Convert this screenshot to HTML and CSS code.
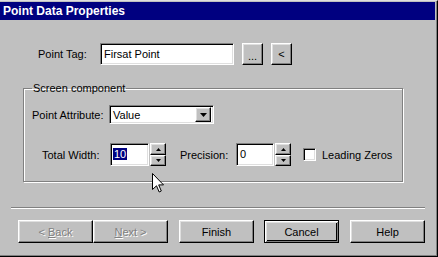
FILE: index.html
```html
<!DOCTYPE html>
<html lang="en">
<head>
  <meta charset="UTF-8" />
  <title>Point Data Properties</title>
  <link rel="stylesheet" href="styles.css">
</head>
<body>

  <div class="window">
    <div class="titlebar">Point Data Properties</div>

    <div class="content">
      <div class="row tag-row">
        <span class="label tag-label">Point Tag:</span>
        <div class="edit tag-edit">Firsat Point</div>
        <button class="btn small-btn browse-btn">...</button>
        <button class="btn small-btn back-btn">&lt;</button>
      </div>

      <fieldset class="group">
        <legend>Screen component</legend>

        <div class="row attr-row">
          <span class="label attr-label">Point Attribute:</span>
          <div class="edit combo">
            <span class="combo-text">Value</span>
            <span class="btn combo-btn">
              <svg width="7" height="4" viewBox="0 0 7 4"><path d="M0 0h7L3.5 4z" fill="#000"/></svg>
            </span>
          </div>
        </div>

        <div class="row width-row">
          <span class="label width-label">Total Width:</span>
          <div class="edit spin-edit width-edit"><span class="selected">10</span></div>
          <div class="spin-btns">
            <span class="btn spin-btn up">
              <svg width="5" height="3" viewBox="0 0 5 3"><path d="M2.5 0L5 3H0z" fill="#000"/></svg>
            </span>
            <span class="btn spin-btn down">
              <svg width="5" height="3" viewBox="0 0 5 3"><path d="M0 0h5L2.5 3z" fill="#000"/></svg>
            </span>
          </div>

          <span class="label precision-label">Precision:</span>
          <div class="edit spin-edit precision-edit">0</div>
          <div class="spin-btns">
            <span class="btn spin-btn up">
              <svg width="5" height="3" viewBox="0 0 5 3"><path d="M2.5 0L5 3H0z" fill="#000"/></svg>
            </span>
            <span class="btn spin-btn down">
              <svg width="5" height="3" viewBox="0 0 5 3"><path d="M0 0h5L2.5 3z" fill="#000"/></svg>
            </span>
          </div>

          <span class="edit checkbox"></span>
          <span class="label check-label">Leading Zeros</span>
        </div>
      </fieldset>

      <div class="separator"></div>

      <div class="row buttons">
        <button class="btn wiz-btn disabled"><span>&lt; <u>B</u>ack</span></button>
        <button class="btn wiz-btn disabled"><span><u>N</u>ext &gt;</span></button>
        <button class="btn wiz-btn finish">Finish</button>
        <button class="btn wiz-btn default">Cancel</button>
        <button class="btn wiz-btn help">Help</button>
      </div>
    </div>

    <svg class="cursor" width="12" height="20" viewBox="0 0 12 20">
      <path d="M0.5 0.5V16.5L4.5 12.8L7.2 19L9.3 18L6.7 11.9H11.5Z" fill="#fff" stroke="#000" stroke-width="1"/>
    </svg>
  </div>

</body>
</html>
```

FILE: styles.css
```css
* {
  box-sizing: border-box;
}

body {
  margin: 0;
  background: #c0c0c0;
  font-family: "Liberation Sans", Arial, sans-serif;
  font-size: 11px;
  color: #000;
}

.window {
  position: relative;
  width: 438px;
  height: 257px;
  padding: 1px 2px 0 0;
  background: #c0c0c0;
  border-top: 1px solid #dfdfdf;
  border-right: 1px solid #000;
  border-bottom: 1px solid #000;
  box-shadow: inset -1px -1px #808080;
  overflow: hidden;
}

.titlebar {
  height: 18px;
  padding-left: 3px;
  background: #000080;
  color: #fff;
  font-weight: bold;
  font-size: 12px;
  line-height: 18px;
}

.row {
  display: flex;
  align-items: center;
}

/* 3d borders */
.btn {
  display: flex;
  align-items: center;
  justify-content: center;
  padding: 0;
  background: #c0c0c0;
  border: 1px solid;
  border-color: #fff #000 #000 #fff;
  box-shadow: inset -1px -1px #808080, inset 1px 1px #dfdfdf;
  font: inherit;
  color: #000;
}

.edit {
  background: #fff;
  border: 1px solid;
  border-color: #808080 #fff #fff #808080;
  box-shadow: inset 1px 1px #000, inset -1px -1px #dfdfdf;
}

/* point tag */
.tag-row {
  margin-top: 23px;
  padding-left: 38px;
  height: 22px;
}

.tag-label {
  width: 62px;
}

.tag-edit {
  width: 134px;
  height: 22px;
  padding-left: 3px;
  line-height: 20px;
}

.small-btn {
  width: 21px;
  height: 22px;
  margin-left: 8px;
}

.browse-btn {
  padding-top: 3px;
}

/* group box */
.group {
  margin: 17px 0 0 23px;
  width: 380px;
  height: 100px;
  padding: 10px 0 0 8px;
  border: 1px solid #808080;
  box-shadow: 1px 1px 0 #fff, inset 1px 1px 0 #fff;
}

.group legend {
  margin-left: 0;
  padding: 0 1px;
  line-height: 13px;
}

.attr-row {
  height: 19px;
}

.attr-label {
  width: 77px;
}

.combo {
  display: flex;
  align-items: center;
  justify-content: space-between;
  width: 105px;
  height: 19px;
  padding: 0 2px 0 3px;
}

.combo-btn {
  width: 16px;
  height: 15px;
}

.width-row {
  margin-top: 19px;
  margin-left: 10px;
  height: 23px;
}

.width-label {
  width: 68px;
}

.spin-edit {
  height: 23px;
  padding-left: 2px;
  line-height: 21px;
}

.width-edit {
  width: 39px;
}

.selected {
  background: #000080;
  color: #fff;
  padding: 0 1px;
}

.spin-btns {
  display: flex;
  flex-direction: column;
  margin-left: 1px;
}

.spin-btn {
  width: 16px;
  height: 11px;
}

.spin-btn.up {
  height: 12px;
}

.precision-label {
  margin-left: 14px;
  width: 56px;
}

.precision-edit {
  width: 38px;
  padding-left: 3px;
}

.checkbox {
  display: block;
  width: 13px;
  height: 13px;
  margin-left: 12px;
}

.check-label {
  margin-left: 6px;
}

/* bottom */
.separator {
  margin: 25px 0 0 11px;
  width: 414px;
  height: 2px;
  border-top: 1px solid #808080;
  border-bottom: 1px solid #fff;
}

.buttons {
  margin: 11px 0 0 18px;
}

.wiz-btn {
  width: 75px;
  height: 23px;
}

.wiz-btn.disabled span {
  color: #808080;
  text-shadow: 1px 1px 0 #fff;
}

.finish {
  margin-left: 11px;
}

.default {
  margin-left: 10px;
  border: 1px solid #000;
  box-shadow: inset 1px 1px #fff, inset -1px -1px #808080, inset 2px 2px #dfdfdf, inset -2px -2px #000;
}

.help {
  margin-left: 11px;
}

.cursor {
  position: absolute;
  left: 152px;
  top: 172px;
}
```
